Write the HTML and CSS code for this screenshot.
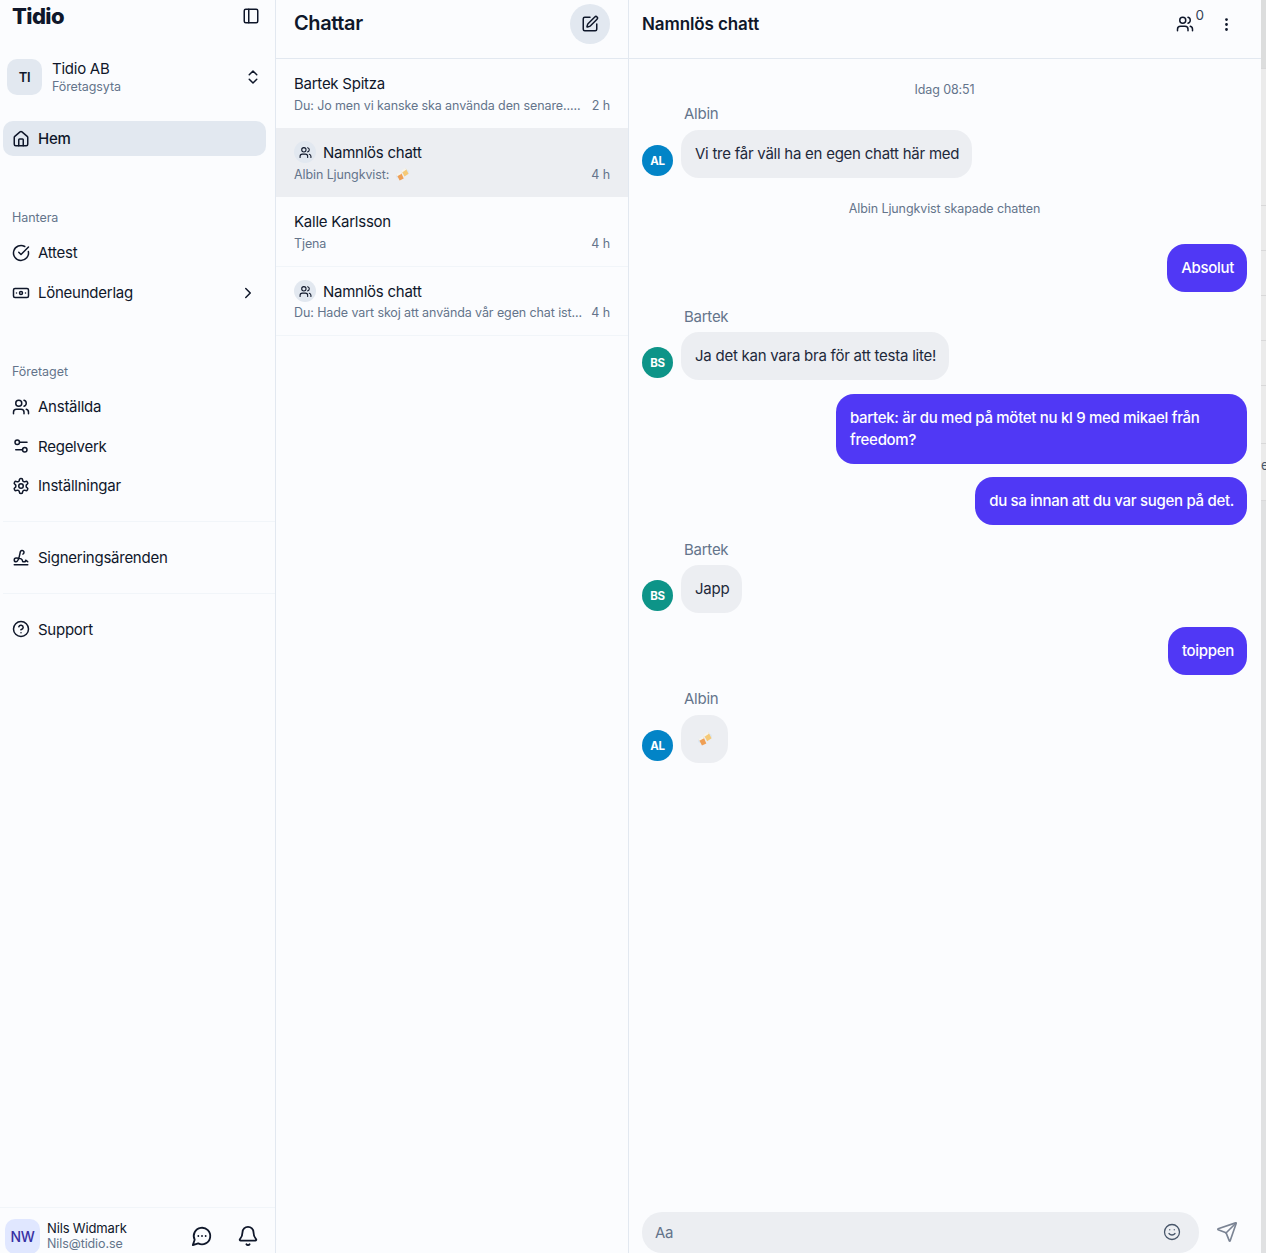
FILE: index.html
```html
<!DOCTYPE html>
<html lang="sv">
<head>
    <meta charset="UTF-8">
    <title>Tidio - Chattar</title>
    <link rel="stylesheet" href="styles.css">
</head>
<body>
    <svg class="defs" width="0" height="0">
        <symbol id="i-users" viewBox="0 0 24 24"><path d="M16 21v-2a4 4 0 0 0-4-4H6a4 4 0 0 0-4 4v2"/><circle cx="9" cy="7" r="4"/><path d="M16 3.128a4 4 0 0 1 0 7.744"/><path d="M22 21v-2a4 4 0 0 0-3-3.87"/></symbol>
        <symbol id="i-beers" viewBox="0 0 16 16"><circle class="halo" cx="13" cy="5" r="3"/><circle class="halo" cx="2.500" cy="10" r="2.500"/><path class="mug" d="M1 8.500 6.500 6 9.500 13 4.500 15.500z"/><path class="mug-b" d="M7 4 12 .5 15.500 7 10.500 10.500z"/><path class="foam" d="M.5 8 6 5 7 7 1.500 10zM6.500 3.500 11.500 0 12.500 2 7.500 5.500z"/></symbol>
    </svg>
    <div class="app">
        <!-- Sidebar -->
        <aside class="sidebar">
            <div class="logo-row">
                <span class="logo">Tidio</span>
                <svg class="icon" viewBox="0 0 24 24"><rect x="3" y="3" width="18" height="18" rx="2"/><path d="M9 3v18"/></svg>
            </div>
            <div class="workspace">
                <div class="workspace-avatar">TI</div>
                <div class="workspace-text">
                    <div class="workspace-name">Tidio AB</div>
                    <div class="workspace-sub">Företagsyta</div>
                </div>
                <svg class="icon" viewBox="0 0 24 24"><path d="m7 15 5 5 5-5"/><path d="m7 9 5-5 5 5"/></svg>
            </div>
            <nav>
                <a class="nav-item active">
                    <svg class="icon" viewBox="0 0 24 24"><path d="M15 21v-8a1 1 0 0 0-1-1h-4a1 1 0 0 0-1 1v8"/><path d="M3 10a2 2 0 0 1 .709-1.528l7-5.999a2 2 0 0 1 2.582 0l7 5.999A2 2 0 0 1 21 10v9a2 2 0 0 1-2 2H5a2 2 0 0 1-2-2z"/></svg>
                    Hem
                </a>
                <div class="nav-label label-first">Hantera</div>
                <a class="nav-item tall">
                    <svg class="icon" viewBox="0 0 24 24"><path d="M21.801 10A10 10 0 1 1 17 3.335"/><path d="m9 11 3 3L22 4"/></svg>
                    Attest
                </a>
                <a class="nav-item tall">
                    <svg class="icon" viewBox="0 0 24 24"><rect x="2" y="6" width="20" height="12" rx="2"/><circle cx="12" cy="12" r="2"/><path d="M6 12h.01M18 12h.01"/></svg>
                    Löneunderlag
                    <svg class="icon nav-arrow" viewBox="0 0 24 24"><path d="m9 18 6-6-6-6"/></svg>
                </a>
                <div class="nav-label label-second">Företaget</div>
                <a class="nav-item">
                    <svg class="icon"><use href="#i-users"/></svg>
                    Anställda
                </a>
                <a class="nav-item">
                    <svg class="icon" viewBox="0 0 24 24"><path d="M20 7h-9"/><path d="M14 17H5"/><circle cx="17" cy="17" r="3"/><circle cx="7" cy="7" r="3"/></svg>
                    Regelverk
                </a>
                <a class="nav-item">
                    <svg class="icon" viewBox="0 0 24 24"><path d="M12.22 2h-.44a2 2 0 0 0-2 2v.18a2 2 0 0 1-1 1.73l-.43.25a2 2 0 0 1-2 0l-.15-.08a2 2 0 0 0-2.73.73l-.22.38a2 2 0 0 0 .73 2.73l.15.1a2 2 0 0 1 1 1.72v.51a2 2 0 0 1-1 1.74l-.15.09a2 2 0 0 0-.73 2.73l.22.38a2 2 0 0 0 2.73.73l.15-.08a2 2 0 0 1 2 0l.43.25a2 2 0 0 1 1 1.73V20a2 2 0 0 0 2 2h.44a2 2 0 0 0 2-2v-.18a2 2 0 0 1 1-1.73l.43-.25a2 2 0 0 1 2 0l.15.08a2 2 0 0 0 2.73-.73l.22-.39a2 2 0 0 0-.73-2.73l-.15-.08a2 2 0 0 1-1-1.74v-.5a2 2 0 0 1 1-1.74l.15-.09a2 2 0 0 0 .73-2.73l-.22-.38a2 2 0 0 0-2.73-.73l-.15.08a2 2 0 0 1-2 0l-.43-.25a2 2 0 0 1-1-1.73V4a2 2 0 0 0-2-2z"/><circle cx="12" cy="12" r="3"/></svg>
                    Inställningar
                </a>
                <div class="nav-split">
                    <a class="nav-item">
                        <svg class="icon" viewBox="0 0 24 24"><path d="m21 17-2.156-1.868A.5.5 0 0 0 18 15.5v.5a1 1 0 0 1-1 1h-2a1 1 0 0 1-1-1c0-2.545-3.991-3.97-8.5-4a1 1 0 0 0 0 5c4.153 0 4.745-11.295 5.708-13.5a2.5 2.5 0 1 1 3.31 3.284"/><path d="M3 21h18"/></svg>
                        Signeringsärenden
                    </a>
                </div>
                <div class="nav-split">
                    <a class="nav-item">
                        <svg class="icon" viewBox="0 0 24 24"><circle cx="12" cy="12" r="10"/><path d="M9.09 9a3 3 0 0 1 5.83 1c0 2-3 3-3 3"/><path d="M12 17h.01"/></svg>
                        Support
                    </a>
                </div>
            </nav>
            <div class="user-bar">
                <div class="user-avatar">NW</div>
                <div class="user-text">
                    <div class="user-name">Nils Widmark</div>
                    <div class="user-mail">Nils@tidio.se</div>
                </div>
                <svg class="icon icon-big" viewBox="0 0 24 24"><path d="M7.9 20A9 9 0 1 0 4 16.1L2 22Z"/><path d="M8 12h.01M12 12h.01M16 12h.01"/></svg>
                <svg class="icon icon-big" viewBox="0 0 24 24"><path d="M10.268 21a2 2 0 0 0 3.464 0"/><path d="M3.262 15.326A1 1 0 0 0 4 17h16a1 1 0 0 0 .74-1.673C19.41 13.956 18 12.499 18 8A6 6 0 0 0 6 8c0 4.499-1.411 5.956-2.738 7.326"/></svg>
            </div>
        </aside>

        <!-- Chat list -->
        <section class="chat-list">
            <header class="list-header">
                <h2>Chattar</h2>
                <button class="compose">
                    <svg class="icon" viewBox="0 0 24 24"><path d="M12 3H5a2 2 0 0 0-2 2v14a2 2 0 0 0 2 2h14a2 2 0 0 0 2-2v-7"/><path d="M18.375 2.625a1 1 0 0 1 3 3l-9.013 9.014a2 2 0 0 1-.853.505l-2.873.84a.5.5 0 0 1-.62-.62l.84-2.873a2 2 0 0 1 .506-.852z"/></svg>
                </button>
            </header>
            <div class="chat-row">
                <div class="row-title">Bartek Spitza</div>
                <div class="row-sub"><span>Du: Jo men vi kanske ska använda den senare.....</span><span>2 h</span></div>
            </div>
            <div class="chat-row selected">
                <div class="row-title"><span class="group-badge"><svg class="icon"><use href="#i-users"/></svg></span>Namnlös chatt</div>
                <div class="row-sub"><span>Albin Ljungkvist: <svg class="beers"><use href="#i-beers"/></svg></span><span>4 h</span></div>
            </div>
            <div class="chat-row lined tall-row">
                <div class="row-title">Kalle Karlsson</div>
                <div class="row-sub"><span>Tjena</span><span>4 h</span></div>
            </div>
            <div class="chat-row lined last-row">
                <div class="row-title"><span class="group-badge"><svg class="icon"><use href="#i-users"/></svg></span>Namnlös chatt</div>
                <div class="row-sub"><span>Du: Hade vart skoj att använda vår egen chat ist...</span><span>4 h</span></div>
            </div>
        </section>

        <!-- Conversation -->
        <main class="chat">
            <header class="chat-header">
                <h2>Namnlös chatt</h2>
                <svg class="icon"><use href="#i-users"/></svg>
                <span class="member-count">0</span>
                <svg class="icon icon-more" viewBox="0 0 24 24"><circle cx="12" cy="5" r="1"/><circle cx="12" cy="12" r="1"/><circle cx="12" cy="19" r="1"/></svg>
            </header>
            <div class="messages">
                <div class="stamp">Idag 08:51</div>
                <div class="sender s-first">Albin</div>
                <div class="msg">
                    <div class="avatar blue">AL</div>
                    <div class="bubble">Vi tre får väll ha en egen chatt här med</div>
                </div>
                <div class="stamp">Albin Ljungkvist skapade chatten</div>
                <div class="msg own m-absolut"><div class="bubble">Absolut</div></div>
                <div class="sender s-bartek">Bartek</div>
                <div class="msg">
                    <div class="avatar green">BS</div>
                    <div class="bubble">Ja det kan vara bra för att testa lite!</div>
                </div>
                <div class="msg own m-gap"><div class="bubble">bartek: är du med på mötet nu kl 9 med mikael från freedom?</div></div>
                <div class="msg own m-gap2"><div class="bubble">du sa innan att du var sugen på det.</div></div>
                <div class="sender s-bartek">Bartek</div>
                <div class="msg">
                    <div class="avatar green">BS</div>
                    <div class="bubble">Japp</div>
                </div>
                <div class="msg own m-gap"><div class="bubble">toippen</div></div>
                <div class="sender s-last">Albin</div>
                <div class="msg">
                    <div class="avatar blue">AL</div>
                    <div class="bubble"><svg class="beers"><use href="#i-beers"/></svg></div>
                </div>
            </div>
            <footer class="composer">
                <div class="input-box">
                    <span class="placeholder">Aa</span>
                    <svg class="icon icon-smile" viewBox="0 0 24 24"><circle cx="12" cy="12" r="10"/><path d="M8 14s1.500 2 4 2 4-2 4-2"/><path d="M9 9h.01M15 9h.01"/></svg>
                </div>
                <svg class="icon icon-send" viewBox="0 0 24 24"><path d="M14.536 21.686a.5.5 0 0 0 .937-.024l6.5-19a.496.496 0 0 0-.635-.635l-19 6.5a.5.5 0 0 0-.024.937l7.93 3.18a2 2 0 0 1 1.112 1.11z"/><path d="m21.854 2.147-10.94 10.939"/></svg>
            </footer>
        </main>

        <!-- Edge of the window behind -->
        <div class="edge">
            <div class="edge-cell c1"></div>
            <div class="edge-cell c2"></div>
            <div class="edge-cell c3"></div>
            <div class="edge-cell c3"></div>
            <div class="edge-cell c3"></div>
            <div class="edge-cell c3"></div>
            <div class="edge-cell c4"></div>
            <div class="edge-cell c5">e</div>
        </div>
    </div>
</body>
</html>
```

FILE: styles.css
```css
* {
    box-sizing: border-box;
}
html, body {
    margin: 0;
    height: 100%;
    overflow: hidden;
}
body {
    font-family: "Inter", "Liberation Sans", sans-serif;
    font-size: 15px;
    letter-spacing: -0.25px;
    color: #0f172a;
    background: #fbfcfe;
}
.defs {
    position: absolute;
}
.app {
    display: flex;
    height: 1253px;
}
.icon {
    width: 18px;
    height: 18px;
    flex: none;
    fill: none;
    stroke: #0f172a;
    stroke-width: 2;
    stroke-linecap: round;
    stroke-linejoin: round;
}
.icon-big {
    width: 22px;
    height: 22px;
}

/* Sidebar */
.sidebar {
    width: 276px;
    flex: none;
    display: flex;
    flex-direction: column;
    border-right: 1px solid #e2e8f0;
}
.logo-row {
    height: 32px;
    display: flex;
    align-items: center;
    justify-content: space-between;
    padding: 0 15px 0 12px;
}
.logo {
    font-size: 22px;
    font-weight: 800;
    letter-spacing: -0.6px;
}
.workspace {
    display: flex;
    align-items: center;
    margin-top: 27px;
    padding: 0 13px 0 7px;
    height: 36px;
}
.workspace-avatar {
    width: 35px;
    height: 36px;
    border-radius: 10px;
    background: #e2e8f0;
    display: flex;
    align-items: center;
    justify-content: center;
    font-size: 13px;
    font-weight: 600;
}
.workspace-text {
    flex: 1;
    margin: 2px 0 0 10px;
}
.workspace-name {
    line-height: 18px;
}
.workspace-sub {
    font-size: 12.5px;
    letter-spacing: -0.1px;
    line-height: 18px;
    color: #64748b;
}
nav {
    margin-top: 26px;
}
.nav-item {
    display: flex;
    align-items: center;
    height: 39.5px;
    padding-left: 12px;
    gap: 8px;
    margin-right: 9px;
}
.nav-item.tall {
    height: 40px;
}
.nav-item.active {
    height: 35px;
    margin-left: 3px;
    padding-left: 9px;
    background: #e2e8f0;
    border-radius: 10px;
    font-weight: 500;
}
.nav-arrow {
    margin-left: auto;
    margin-right: 9px;
}
.nav-label {
    font-size: 12.5px;
    letter-spacing: -0.05px;
    line-height: 18px;
    color: #64748b;
    padding-left: 12px;
}
.label-first {
    margin-top: 53px;
    margin-bottom: 5.5px;
}
.label-second {
    margin-top: 50.5px;
    margin-bottom: 5.75px;
}
.nav-split {
    margin-top: 16px;
    padding: 15.5px 0 16px;
    border-top: 1px solid #f1f5f9;
    margin-left: 3px;
}
.nav-split + .nav-split {
    margin-top: 0;
    padding-top: 15px;
}
.nav-split .nav-item {
    padding-left: 9px;
}
.user-bar {
    margin-top: auto;
    height: 46px;
    border-top: 1px solid #f1f5f9;
    display: flex;
    align-items: flex-start;
    padding: 11px 16px 0 5px;
}
.user-avatar {
    width: 35px;
    height: 35px;
    flex: none;
    border-radius: 10px;
    background: #e0e7ff;
    color: #3730a3;
    font-size: 14px;
    font-weight: 500;
    display: flex;
    align-items: center;
    justify-content: center;
}
.user-text {
    flex: 1;
    margin: 1px 0 0 7px;
    line-height: 16px;
}
.user-name {
    font-size: 13px;
    letter-spacing: -0.15px;
}
.user-mail {
    font-size: 12.5px;
    letter-spacing: -0.1px;
    color: #64748b;
}
.user-bar .icon-big {
    margin: 6px 0 0 24px;
}

/* Chat list */
.chat-list {
    width: 353px;
    flex: none;
    border-right: 1px solid #e2e8f0;
}
.list-header {
    height: 59px;
    padding: 4px 18px 0;
    display: flex;
    justify-content: space-between;
    border-bottom: 1px solid #e2e8f0;
}
.list-header h2 {
    margin: 7px 0 0;
    font-size: 20px;
    font-weight: 600;
    letter-spacing: -0.4px;
    line-height: 24px;
}
.compose {
    width: 40px;
    height: 40px;
    border: none;
    border-radius: 50%;
    background: #e2e8f0;
    display: flex;
    align-items: center;
    justify-content: center;
    padding: 0;
}
.chat-row {
    height: 69px;
    padding: 13px 18px 0;
}
.chat-row.selected {
    background: #eceef2;
}
.chat-row.lined {
    border-bottom: 1px solid #f1f5f9;
}
.chat-row.tall-row {
    height: 70px;
}
.row-title {
    display: flex;
    align-items: center;
    height: 22px;
}
.group-badge {
    width: 22px;
    height: 22px;
    border-radius: 50%;
    background: #e2e8f0;
    display: flex;
    align-items: center;
    justify-content: center;
    margin-right: 7px;
}
.group-badge .icon {
    width: 13px;
    height: 13px;
}
.row-sub {
    display: flex;
    justify-content: space-between;
    margin-top: 2px;
    font-size: 12.5px;
    letter-spacing: -0.1px;
    line-height: 20px;
    white-space: nowrap;
    color: #64748b;
}
.last-row .row-sub {
    margin-top: 1px;
}
.beers {
    width: 13px;
    height: 13px;
    vertical-align: -2px;
    margin-left: 3px;
}
.halo {
    fill: #dbe7f3;
}
.mug {
    fill: #ef9f55;
}
.mug-b {
    fill: #f5c977;
}
.foam {
    fill: #f6f3ec;
}

/* Conversation */
.chat {
    width: 632px;
    flex: none;
    display: flex;
    flex-direction: column;
}
.chat-header {
    height: 59px;
    flex: none;
    display: flex;
    align-items: center;
    padding: 0 26px 10px 13px;
    border-bottom: 1px solid #e2e8f0;
}
.chat-header h2 {
    margin: 0 auto 0 0;
    font-size: 17px;
    font-weight: 600;
    letter-spacing: -0.1px;
}
.member-count {
    font-size: 13.5px;
    letter-spacing: 0;
    align-self: flex-start;
    margin: 7px 0 0 1px;
    color: #334155;
}
.icon-more {
    margin-left: 14px;
    width: 17px;
    height: 17px;
}
.messages {
    flex: 1;
    padding: 0 14px 0 13px;
    overflow: hidden;
}
.stamp {
    text-align: center;
    font-size: 12.5px;
    letter-spacing: -0.1px;
    line-height: 16px;
    color: #64748b;
    margin-top: 23px;
}
.sender {
    line-height: 18px;
    color: #64748b;
    margin-left: 42px;
}
.s-first {
    margin-top: 7px;
    margin-bottom: 7px;
}
.s-bartek {
    margin-top: 16px;
    margin-bottom: 6px;
}
.s-last {
    margin-top: 15px;
    margin-bottom: 7px;
}
.msg {
    display: flex;
    align-items: flex-end;
    gap: 8px;
}
.msg.own {
    justify-content: flex-end;
}
.m-absolut { margin-top: 27px; }
.m-gap { margin-top: 14px; }
.m-gap2 { margin-top: 13px; }
.avatar {
    width: 31px;
    height: 31px;
    flex: none;
    border-radius: 50%;
    color: #fff;
    font-size: 11.5px;
    font-weight: 700;
    letter-spacing: -0.2px;
    display: flex;
    align-items: center;
    justify-content: center;
    margin-bottom: 2px;
}
.blue { background: #0284c7; }
.green { background: #0d9488; }
.bubble {
    max-width: 411px;
    padding: 13px 13px 13px 14px;
    line-height: 22px;
    border-radius: 18px;
    background: #eceef2;
    color: #1e293b;
}
.own .bubble {
    background: #5038f5;
    color: #fff;
    font-weight: 500;
    letter-spacing: -0.3px;
}
.bubble .beers {
    display: block;
    width: 20px;
    height: 14px;
    margin: 4px 0;
}
.composer {
    height: 41px;
    flex: none;
    display: flex;
    align-items: flex-start;
    padding: 0 23px 0 13px;
    gap: 17px;
}
.input-box {
    flex: 1;
    height: 41px;
    border-radius: 20px;
    background: #eceef2;
    display: flex;
    align-items: center;
    justify-content: space-between;
    padding: 0 18px 1px 13px;
}
.placeholder {
    color: #64748b;
}
.icon-smile {
    stroke: #475569;
    stroke-width: 1.7;
}
.icon-send {
    margin-top: 9px;
    width: 22px;
    height: 22px;
    stroke: #7b8494;
    stroke-width: 1.8;
}

/* Window edge */
.edge {
    flex: 1;
    display: flex;
    flex-direction: column;
    background: #e0e1e2;
    font-size: 13px;
    color: #475569;
}
.edge-cell {
    border-bottom: 1px solid #d8d8d9;
    background: #ebebeb;
    overflow: hidden;
}
.c1 { height: 69px; background: #dcdddd; }
.c2 { height: 137px; }
.c3 { height: 45px; }
.c4 { height: 58px; }
.c5 { height: 57px; line-height: 42px; }
```
